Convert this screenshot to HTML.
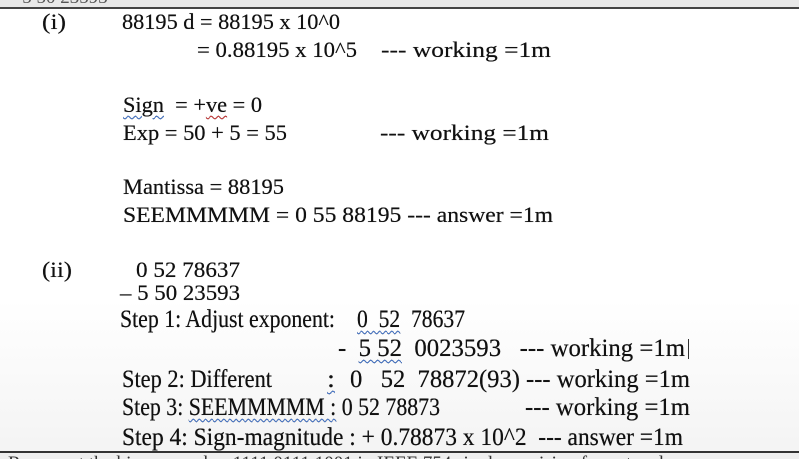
<!DOCTYPE html>
<html><head><meta charset="utf-8"><style>
html,body{margin:0;padding:0}
body{width:799px;height:459px;overflow:hidden;position:relative;background:linear-gradient(#fff 0,#fff 300px,#f3f3f3 459px);font-family:"Liberation Serif",serif;color:#111}
.t{position:absolute;white-space:nowrap;height:24px;line-height:24px;text-shadow:0 0 0.4px #111}
.t>span{display:inline-block;transform-origin:0 50%}
.a{font-size:22px}.b{font-size:25px}
.sq{text-decoration:underline wavy #4a7bd0;text-decoration-thickness:1px;text-underline-offset:3px}
.sr{text-decoration:underline wavy #d04040;text-decoration-thickness:1px;text-underline-offset:3px}
</style></head><body>
<div style="position:absolute;left:0;top:0;width:799px;height:7px;background:#e8e8e8;overflow:hidden"><div style="position:absolute;left:8px;top:-13px;font-size:19px;color:#555">– 5 50 23593</div></div>
<div style="position:absolute;left:0;top:7px;width:799px;height:2px;background:#444"></div>

<div class="t a" style="left:42px;top:10px;width:24px"><span>(i)</span></div>
<div class="t a" style="left:122px;top:10px;width:218px"><span>88195 d = 88195 x 10^0</span></div>
<div class="t a" style="left:197px;top:38px;width:160px"><span>= 0.88195 x 10^5</span></div>
<div class="t a" style="left:381px;top:38px;width:170px"><span>--- working =1m</span></div>
<div class="t a" style="left:123px;top:93px;width:139px"><span><span class="sq">Sign</span>&nbsp; = +<span class="sr">ve</span> = 0</span></div>
<div class="t a" style="left:123px;top:121px;width:164px"><span>Exp = 50 + 5 = 55</span></div>
<div class="t a" style="left:380px;top:121px;width:169px"><span>--- working =1m</span></div>
<div class="t a" style="left:123px;top:175px;width:161px"><span>Mantissa = 88195</span></div>
<div class="t a" style="left:123px;top:203px;width:430px"><span>SEEMMMMM = 0 55 88195 --- answer =1m</span></div>
<div class="t a" style="left:42px;top:258px;width:30px"><span>(ii)</span></div>
<div class="t a" style="left:136px;top:258px;width:104px"><span>0 52 78637</span></div>
<div class="t a" style="left:120px;top:281px;width:120px"><span>– 5 50 23593</span></div>

<div class="t b" style="left:120px;top:308px;width:215px"><span>Step 1: Adjust exponent:</span></div>
<div class="t b" style="left:357px;top:308px;width:108px"><span><span class="sq">0&nbsp; 52</span>&nbsp; 78637</span></div>
<div class="t b" style="left:338px;top:337px;width:347px"><span>-&nbsp; <span class="sq">5&nbsp;52</span>&nbsp; 0023593&nbsp;&nbsp; --- working =1m</span></div>
<div style="position:absolute;left:688px;top:339px;width:1px;height:20px;background:#333"></div>
<div class="t b" style="left:122px;top:368px;width:150px"><span>Step 2: Different</span></div>
<div class="t b" style="left:327px;top:368px;width:8px"><span class="sq">:</span></div>
<div class="t b" style="left:350px;top:368px;width:340px"><span>0&nbsp;&nbsp; 52&nbsp; 78872(93) --- working =1m</span></div>
<div class="t b" style="left:122px;top:396px;width:318px"><span>Step 3: <span class="sq">SEEMMMMM :</span> 0 52 78873</span></div>
<div class="t b" style="left:525px;top:396px;width:165px"><span>--- working =1m</span></div>
<div class="t b" style="left:122px;top:426px;width:561px"><span>Step 4: Sign-magnitude : + 0.78873 x 10^2&nbsp; --- answer =1m</span></div>

<div style="position:absolute;left:0;top:451px;width:799px;height:2px;background:#333"></div>
<div style="position:absolute;left:0;top:453px;width:799px;height:6px;overflow:hidden;background:#eee"><div style="position:absolute;left:8px;top:0;font-size:19px;color:#333">Represent the binary number 1111 0111 1001 in IEEE 754 single precision format and</div></div>
<script>
document.querySelectorAll('.t').forEach(function(d){var s=d.firstElementChild;var W=parseFloat(d.style.width);var w=s.getBoundingClientRect().width;if(w>0)s.style.transform='scaleX('+(W/w)+')';});
</script>
</body></html>
